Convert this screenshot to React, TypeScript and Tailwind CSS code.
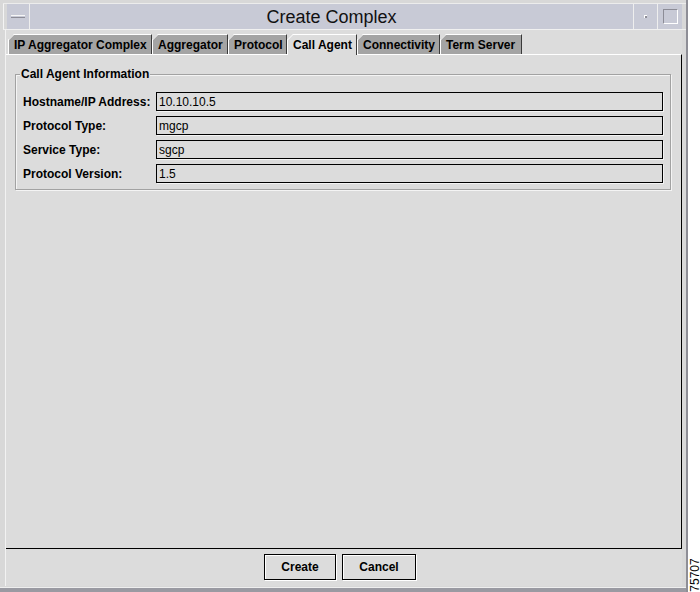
import React from "react";

const tabs = [
  { label: "IP Aggregator Complex", w: 144 },
  { label: "Aggregator", w: 76 },
  { label: "Protocol", w: 59 },
  { label: "Call Agent", w: 70, active: true },
  { label: "Connectivity", w: 83 },
  { label: "Term Server", w: 82 },
];

const rows = [
  { label: "Hostname/IP Address:", value: "10.10.10.5" },
  { label: "Protocol Type:", value: "mgcp" },
  { label: "Service Type:", value: "sgcp" },
  { label: "Protocol Version:", value: "1.5" },
];

function Tab({ label, w, active }: { label: string; w: number; active?: boolean }) {
  return (
    <div
      className={
        "relative h-[20px] flex items-center pl-[5px] border-l border-t border-white border-r border-r-[#3a3a3a] text-[12px] font-bold text-black " +
        (active ? "bg-[#dcdcdc] -mb-px h-[21px] z-10" : "bg-[#a4a4a4]")
      }
      style={{ width: w }}
    >
      <svg className="absolute -left-px -top-px" width="6" height="6" viewBox="0 0 6 6">
        <polygon points="0,0 6,0 0,6" fill="#dcdcdc" />
        <line x1="0.5" y1="6" x2="6" y2="0.5" stroke="#ffffff" strokeWidth="1" />
      </svg>
      <span className="whitespace-nowrap">{label}</span>
    </div>
  );
}

export default function App() {
  return (
    <div
      className="w-[700px] h-[592px] bg-white flex overflow-hidden"
      style={{ fontFamily: '"Liberation Sans", Arial, sans-serif' }}
    >
      {/* window */}
      <div className="w-[688px] h-[592px] shrink-0 flex flex-col bg-[#d8d8d8] border-l-[3px] border-l-[#d8d8d8] border-r-[2px] border-r-[#8e8e96] relative">
        {/* top frame */}
        <div className="h-[4px] shrink-0 border-b border-[#ececec]" />
        {/* title bar */}
        <div className="h-[26px] shrink-0 flex border-b border-[#f0f0f0]">
          <div className="w-[4px] shrink-0 border-l border-[#f4f4f4]" />
          <div className="w-[23px] shrink-0 bg-[#c8cad6] border-r border-[#eeeeee] flex items-center justify-center">
            <div className="w-[14px] h-[3px] border-t border-[#f6f6f6] border-b border-b-[#8c8c96] bg-[#c8cad6]" />
          </div>
          <div className="flex-1 bg-[#c8cad6] flex items-center justify-center text-[18px] text-[#111] pt-[2px]">
            Create Complex
          </div>
          <div className="w-[24px] shrink-0 bg-[#c8cad6] border-l border-[#eeeeee] flex items-center justify-center">
            <div className="w-[3px] h-[3px] bg-[#8c8c96] border-t border-l border-white" />
          </div>
          <div className="w-[25px] shrink-0 bg-[#c8cad6] border-l border-[#eeeeee] flex items-center justify-center">
            <div className="w-[15px] h-[15px] border border-t-[#8c8c96] border-l-[#8c8c96] border-r-white border-b-white" />
          </div>
          <div className="w-[4px] shrink-0" />
        </div>
        {/* body */}
        <div className="flex-1 flex flex-col pl-[2px] pr-[4px] pb-[6px] bg-[#d8d8d8]">
          <div className="flex-1 flex flex-col bg-[#dcdcdc] border-l border-[#f2f2f2] pt-[4px]">
            {/* tabs */}
            <div className="flex pl-[2px] h-[20px] relative">
              {tabs.map((t) => (
                <Tab key={t.label} label={t.label} w={t.w} active={t.active} />
              ))}
            </div>
            {/* panel */}
            <div className="h-[495px] border-t border-white border-r border-r-black border-b border-b-black pt-[19px] pl-[9px] pr-[10px]">
              <div className="relative h-[116px] border border-[#a2a2a2] shadow-[1px_1px_0_#f4f4f4,inset_1px_1px_0_#f4f4f4] pt-[17px] pl-[7px] pr-[7px]">
                <div className="absolute left-[4px] top-[-9px] bg-[#dcdcdc] px-[1px] text-[12px] font-bold text-black leading-[16px]">
                  Call Agent Information
                </div>
                <div className="flex flex-col gap-[5px]">
                  {rows.map((r) => (
                    <div key={r.label} className="flex items-center h-[19px]">
                      <div className="w-[133px] shrink-0 text-[12px] font-bold text-black whitespace-nowrap">
                        {r.label}
                      </div>
                      <div className="flex-1 h-[19px] border border-black bg-[#dcdcdc] shadow-[1px_1px_0_#f4f4f4] flex items-center pl-[2px] text-[12px] text-black">
                        {r.value}
                      </div>
                    </div>
                  ))}
                </div>
              </div>
            </div>
            {/* buttons */}
            <div className="flex-1 flex justify-center items-start pt-[5px] gap-[6px] pr-[8px]">
              <button className="w-[72px] h-[26px] border border-black shadow-[inset_1px_1px_0_#ffffff,1px_1px_0_#ffffff] bg-[#dcdcdc] text-[12px] font-bold text-black">
                Create
              </button>
              <button className="w-[74px] h-[26px] border border-black shadow-[inset_1px_1px_0_#ffffff,1px_1px_0_#ffffff] bg-[#dcdcdc] text-[12px] font-bold text-black">
                Cancel
              </button>
            </div>
          </div>
        </div>
        {/* bottom frame edge */}
        <div className="absolute left-[-3px] right-0 bottom-0 h-[5px] bg-[#9a9aa2] border-t border-[#efefef]" />
      </div>
      {/* side caption */}
      <div className="flex-1 relative">
        <div className="absolute left-0 top-[553px] w-[13px] h-[44px] flex items-center justify-center">
          <span className="-rotate-90 text-[12px] text-black whitespace-nowrap leading-none">75707</span>
        </div>
      </div>
    </div>
  );
}
